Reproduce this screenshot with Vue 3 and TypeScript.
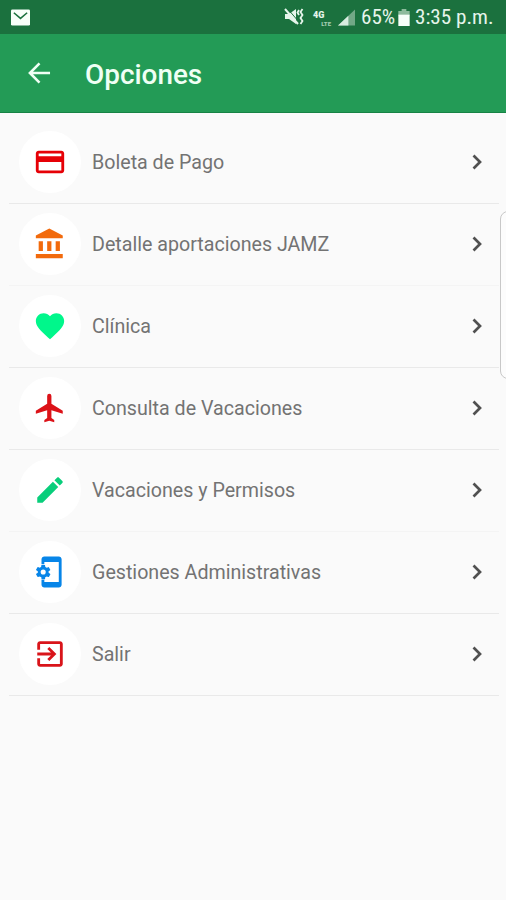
<script setup lang="ts">
interface Option {
  label: string
  color: string
  path: string
  faint?: boolean
}

const options: Option[] = [
  {
    label: 'Boleta de Pago',
    color: '#e60006',
    path: 'M20 4H4c-1.1 0-2 .9-2 2v12c0 1.1.9 2 2 2h16c1.1 0 2-.9 2-2V6c0-1.1-.9-2-2-2zm0 14H4v-6h16v6zm0-10H4V6h16v2z',
  },
  {
    label: 'Detalle aportaciones JAMZ',
    color: '#f26a0c',
    path: 'M4 10v7h3v-7H4zm6 0v7h3v-7h-3zM2 22h19v-3H2v3zm14-12v7h3v-7h-3zM11.500 1L2 6v2h19V6l-9.500-5z',
    faint: true,
  },
  {
    label: 'Clínica',
    color: '#00f78b',
    path: 'M12 21.350l-1.450-1.320C5.400 15.360 2 12.280 2 8.500 2 5.420 4.420 3 7.500 3c1.740 0 3.410.81 4.500 2.090C13.090 3.810 14.760 3 16.500 3 19.580 3 22 5.420 22 8.500c0 3.780-3.400 6.860-8.550 11.540L12 21.350z',
  },
  {
    label: 'Consulta de Vacaciones',
    color: '#dc1218',
    path: 'M21 16v-2l-8-5V3.500a1.500 1.500 0 0 0-3 0V9l-8 5v2l8-2.500V19l-2 1.500V22l3.500-1 3.500 1v-1.500L13 19v-5.500l8 2.500z',
  },
  {
    label: 'Vacaciones y Permisos',
    color: '#08ce7b',
    path: 'M3 17.250V21h3.750L17.810 9.940l-3.750-3.750L3 17.250zM20.710 7.040c.39-.39.39-1.020 0-1.410l-2.340-2.340c-.39-.39-1.020-.39-1.410 0l-1.830 1.830 3.750 3.750 1.830-1.830z',
    faint: true,
  },
  {
    label: 'Gestiones Administrativas',
    color: '#0785e8',
    path: 'M11 12.500v-1l1.100-.8c.1-.1.1-.2.1-.3l-1-1.700c-.1-.1-.2-.2-.3-.1l-1.300.4c-.3-.2-.6-.4-.9-.5l-.2-1.300c0-.1-.1-.2-.3-.2H6.200c-.1 0-.2.1-.3.2l-.2 1.300c-.3.1-.6.3-.9.5l-1.300-.5c-.1 0-.2 0-.3.1l-1 1.700c-.1.2 0 .3.1.4l1.100.8v1l-1.100.8c-.1.2-.1.3-.1.4l1 1.700c.1.1.2.2.3.1l1.400-.4c.3.2.6.4.9.5l.2 1.300c0 .1.1.2.2.2h2c.1 0 .2-.1.3-.2l.2-1.300c.3-.1.6-.3.9-.5l1.300.5c.1 0 .2 0 .3-.1l1-1.700c.1-.1.1-.3 0-.4l-1.100-.9zM7.200 13.800a1.800 1.800 0 1 1 0-3.600 1.800 1.800 0 0 1 0 3.600zM18.200 1H8c-1.100 0-2 .9-2 2v3.500h2V5h10.200v14H8v-1.500H6V21c0 1.100.9 2 2 2h10.200c1.100 0 2-.9 2-2V3c0-1.100-.9-2-2-2z',
  },
  {
    label: 'Salir',
    color: '#d9141a',
    path: 'M10.090 15.590L11.500 17l5-5-5-5-1.410 1.410L12.670 11H3v2h9.670l-2.580 2.590zM19 3H5c-1.110 0-2 .9-2 2v4h2V5h14v14H5v-4H3v4c0 1.100.89 2 2 2h14c1.100 0 2-.9 2-2V5c0-1.100-.9-2-2-2z',
  },
]
</script>

<template>
  <div class="screen">
    <div class="status">
      <svg class="mail" viewBox="0 0 20 17">
        <rect width="20" height="17" rx="1.500" fill="#f7fff9" />
        <path d="M3 3.500L10 9.500l7-6" fill="none" stroke="#1b713e" stroke-width="1.600" />
      </svg>
      <div class="indicators">
        <svg class="mute" viewBox="0 0 20 18">
          <path d="M1 6h4l7-5v15l-7-5H1z" fill="#e6f5eb" />
          <path d="M3 0l12 14" stroke="#1b713e" stroke-width="1" />
          <path d="M1 1l13 15" stroke="#e6f5eb" stroke-width="2" />
          <path d="M15 2l-1.500 2.500L15 7M18.500 1l-2 3 2 3-2 3 2 3-2 3" fill="none" stroke="#e6f5eb" stroke-width="1.800" />
        </svg>
        <span class="network"><b>4G</b><i>LTE</i></span>
        <svg class="signal" viewBox="0 0 18 17">
          <path d="M0 17L18 0v17z" fill="#72a886" />
          <path d="M0 17L11 6.600V17z" fill="#d8ecdf" />
        </svg>
        <span class="percent">65%</span>
        <svg class="battery" viewBox="0 0 12 18">
          <path d="M3.500 0h5v2H12v5H0V2h3.500z" fill="#8dbb9c" />
          <path d="M0 6h12v12H0z" fill="#f7fff9" />
        </svg>
        <span class="clock">3:35 p.m.</span>
      </div>
    </div>
    <header class="toolbar">
      <svg class="back" viewBox="0 0 24 22">
        <path d="M23 11H2M12 1L2 11l10 10" fill="none" stroke="#effff4" stroke-width="2.700" />
      </svg>
      <h1>Opciones</h1>
    </header>
    <ul class="list">
      <li v-for="option in options" :key="option.label" :class="{ faint: option.faint }">
        <span class="avatar">
          <svg viewBox="0 0 24 24"><path :d="option.path" :fill="option.color" /></svg>
        </span>
        <span class="label">{{ option.label }}</span>
        <svg class="chevron" viewBox="0 0 10 16">
          <path d="M1.500 1.500L8 8l-6.500 6.500" fill="none" stroke="#505050" stroke-width="2.700" />
        </svg>
      </li>
    </ul>
    <div class="edge-handle"></div>
  </div>
</template>

<style>
body {
  margin: 0;
  background: #fafafa;
}
</style>

<style scoped>
.screen {
  position: relative;
  height: 900px;
  overflow: hidden;
  background: #fafafa;
  font-family: Roboto, "Liberation Sans", sans-serif;
}
.status {
  box-sizing: border-box;
  height: 34px;
  display: flex;
  align-items: center;
  justify-content: space-between;
  padding: 0 13px 0 11px;
  background: #1b713e;
  color: #e6f5eb;
}
.mail {
  width: 19px;
  height: 17px;
}
.indicators {
  display: flex;
  align-items: center;
  font-family: "Roboto Condensed", Roboto, sans-serif;
  font-size: 20.500px;
}
.mute {
  width: 20px;
  height: 18px;
  margin: 0 9px 0 -2px;
}
.network {
  display: flex;
  flex-direction: column;
  width: 18px;
  margin: 3px 7px 0 0;
  font-family: Roboto, sans-serif;
  font-size: 9px;
  line-height: 9px;
}
.network b {
  font-weight: 900;
}
.network i {
  align-self: flex-end;
  font-size: 6px;
  line-height: 7px;
  font-style: normal;
  font-weight: 900;
  color: #a4cdb2;
}
.signal {
  width: 17px;
  height: 17px;
  margin-right: 6px;
}
.percent,
.clock {
  display: block;
  white-space: nowrap;
  transform-origin: left center;
}
.percent {
  width: 34px;
  margin-right: 3px;
  transform: scaleX(1.030);
}
.battery {
  width: 12px;
  height: 17px;
  margin-right: 5px;
}
.clock {
  width: 78px;
  transform: scaleX(1.030);
}
.toolbar {
  box-sizing: border-box;
  height: 79px;
  display: flex;
  align-items: center;
  gap: 34px;
  padding-left: 28px;
  background: #239b56;
  border-bottom: 1px solid #178345;
}
.back {
  width: 23px;
  height: 22px;
}
h1 {
  margin: 4px 0 0;
  color: #effff4;
  font-size: 27.900px;
  font-weight: 500;
  line-height: 32px;
}
.list {
  list-style: none;
  margin: 0;
  padding: 9px 7px 0 9px;
}
.list li {
  box-sizing: border-box;
  height: 82px;
  display: flex;
  align-items: center;
  padding: 0 17px 0.500px 9.500px;
  border-bottom: 1px solid #e9e9e9;
}
.list li.faint {
  border-bottom-color: #f4f4f4;
}
.avatar {
  width: 62px;
  height: 62px;
  display: flex;
  align-items: center;
  justify-content: center;
  border-radius: 50%;
  background: #fff;
}
.avatar svg {
  width: 34px;
  height: 34px;
}
.label {
  flex: 1;
  margin: 1px 0 0 11.500px;
  color: #737373;
  font-size: 19.650px;
  line-height: 24px;
  white-space: nowrap;
}
.chevron {
  width: 10px;
  height: 16px;
}
.edge-handle {
  position: absolute;
  left: 500px;
  top: 211px;
  box-sizing: border-box;
  width: 20px;
  height: 168px;
  border: 1px solid #c8c8c8;
  border-radius: 8px;
  background: #fcfcfc;
}
</style>
